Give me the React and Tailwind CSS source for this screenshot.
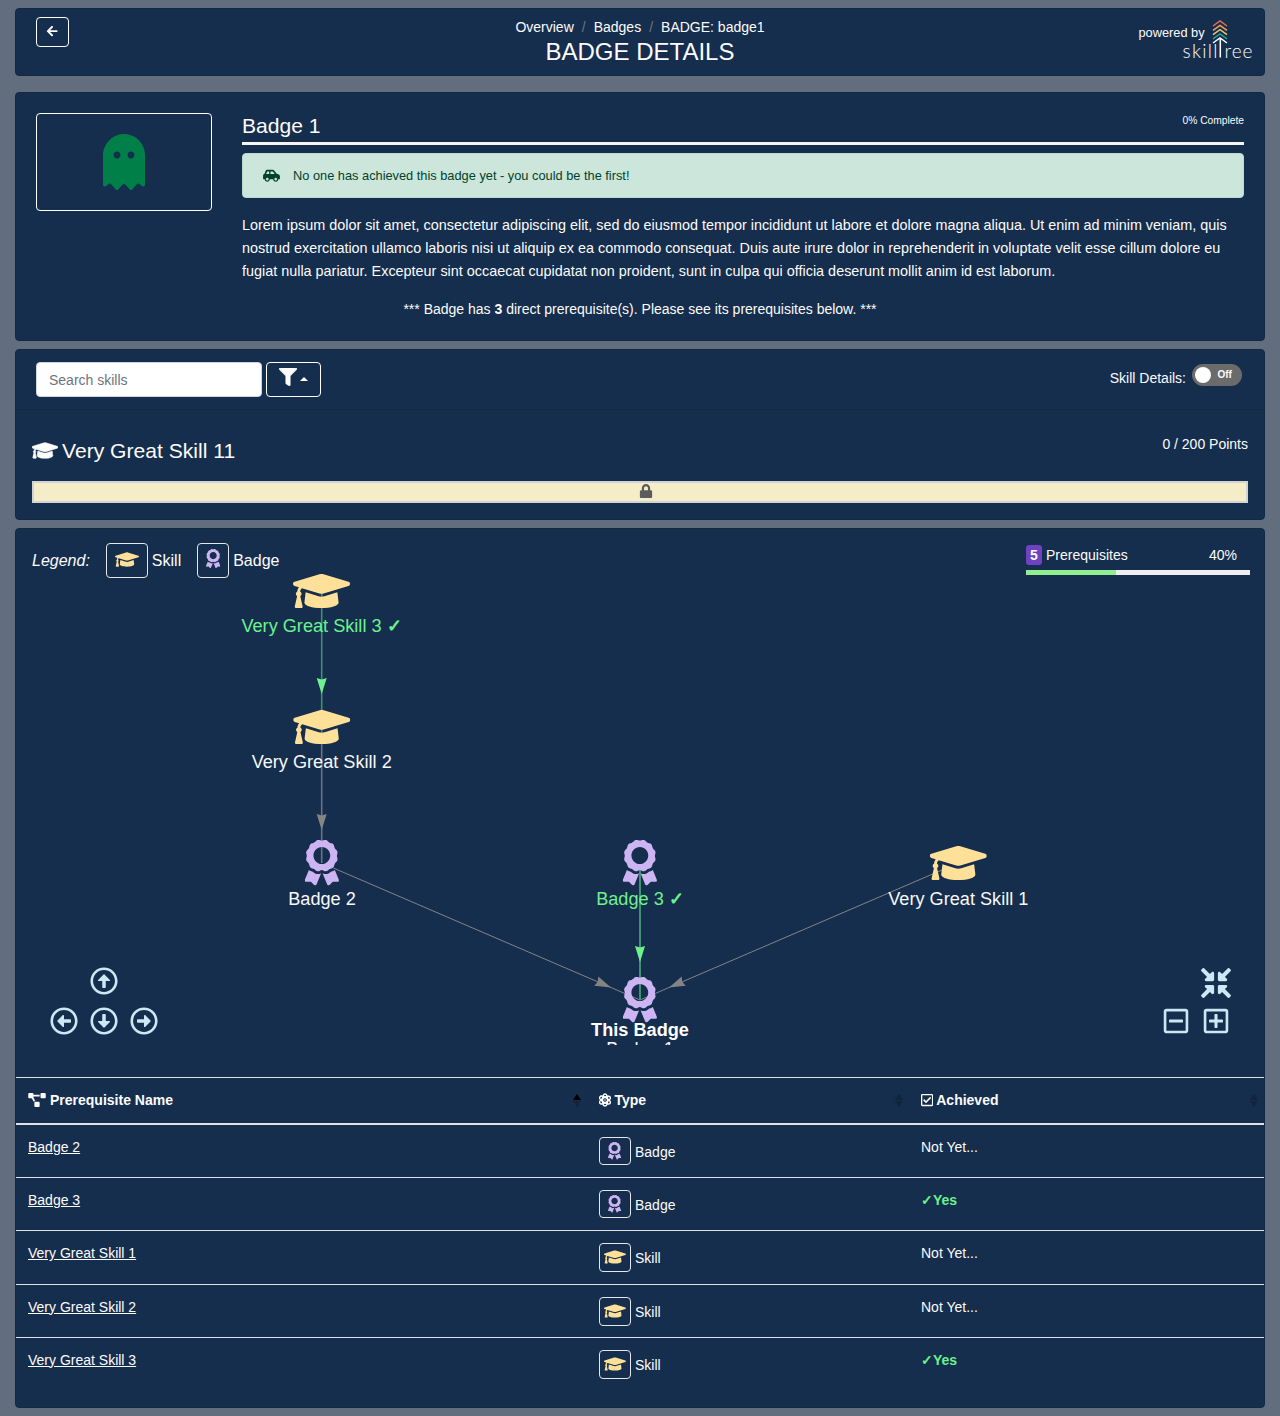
import React from 'react';
import {
  FaArrowLeft, FaGhost, FaCarSide, FaFilter, FaGraduationCap, FaAward, FaLock,
  FaRegArrowAltCircleUp, FaRegArrowAltCircleDown, FaRegArrowAltCircleLeft, FaRegArrowAltCircleRight,
  FaCompressArrowsAlt, FaRegMinusSquare, FaRegPlusSquare, FaProjectDiagram, FaRegCheckSquare,
} from 'react-icons/fa';

const card = 'rounded-[4px] border border-[#132943] bg-[#152e4d]';

function Header() {
  return (
    <header className={`${card} grid h-[68px] grid-cols-[1fr_auto_1fr] pl-5 pr-3 pt-2`}>
      <div>
        <button className="flex h-[30px] w-[33px] items-center justify-center rounded-[4px] border border-white text-[12.25px]">
          <FaArrowLeft className="-mt-[1px]" />
        </button>
      </div>
      <div className="-ml-2 text-center">
        <nav className="flex h-[21px] items-center justify-center gap-2 text-[14px] leading-[21px]">
          <span>Overview</span>
          <span className="text-[#6c757d]">/</span>
          <span>Badges</span>
          <span className="text-[#6c757d]">/</span>
          <span>BADGE: badge1</span>
        </nav>
        <h1 className="text-[24px] leading-[28px]">BADGE DETAILS</h1>
      </div>
      <div className="flex items-start justify-end">
        <span className="-mr-[22.6px] mt-[6px] text-[12.8px] leading-[20px]">powered by</span>
        <svg width="70" height="42" viewBox="0 0 70 42" className="mt-[1px]" fill="none">
          <g strokeWidth="1.5">
            <path d="M31 8 L38 3 L45 8" stroke="#e76f51" />
            <path d="M31 12.3 L38 7.3 L45 12.3" stroke="#f4a261" />
            <path d="M31 16.6 L38 11.6 L45 16.6" stroke="#e9c46a" />
            <path d="M31 20.9 L38 15.9 L45 20.9" stroke="#2a9d8f" />
            <path d="M31 25 L38 20 L45 25 M38.3 20 V39.5" stroke="#fff" />
          </g>
          <text x="0.5" y="39.5" fill="#fff" className="font-['Lato',sans-serif] text-[19px] font-light" textLength="35" lengthAdjust="spacing">skill</text>
          <text x="42.5" y="39.5" fill="#fff" className="font-['Lato',sans-serif] text-[19px] font-light" textLength="28" lengthAdjust="spacing">ree</text>
        </svg>
      </div>
    </header>
  );
}

function BadgeCard() {
  return (
    <section className={`${card} mt-4 h-[249px] p-5`}>
      <div className="flex gap-[30px]">
        <div className="flex h-[98px] w-[176px] shrink-0 items-center justify-center rounded-[4px] border border-white">
          <FaGhost className="text-[56px] text-[#007f49]" />
        </div>
        <div className="min-w-0 flex-1">
          <div className="flex h-8 items-start justify-between border-b-[3px] border-[#f8f5f5]">
            <h2 className="text-[21.1px] leading-[26px]">Badge 1</h2>
            <span className="text-[10.25px] leading-[15px]">0% Complete</span>
          </div>
          <div className="mt-2 flex h-[45px] items-center rounded-[4px] border border-[#bbdccd] bg-[#cce6db] pl-5 text-[12.8px] text-[#00422a]">
            <FaCarSide className="mr-[13px] h-[13.5px] w-[17px]" />
            <span>No one has achieved this badge yet - you could be the first!</span>
          </div>
          <p className="mt-4 text-[14.4px] leading-[23px]">
            Lorem ipsum dolor sit amet, consectetur adipiscing elit, sed do eiusmod tempor incididunt ut labore et dolore magna aliqua. Ut enim ad minim veniam, quis nostrud exercitation ullamco laboris nisi ut aliquip ex ea commodo consequat. Duis aute irure dolor in reprehenderit in voluptate velit esse cillum dolore eu fugiat nulla pariatur. Excepteur sint occaecat cupidatat non proident, sunt in culpa qui officia deserunt mollit anim id est laborum.
          </p>
        </div>
      </div>
      <p className="mt-4 text-center text-[14px] leading-[21px]">
        *** Badge has <b>3</b> direct prerequisite(s). Please see its prerequisites below. ***
      </p>
    </section>
  );
}

function SkillsCard() {
  return (
    <section className={`${card} mt-2 h-[171px]`}>
      <div className="flex h-[60px] items-start border-b border-[#132943] px-5 pt-3">
        <input
          className="h-[35px] w-[226px] rounded-[4px] border border-[#ced4da] bg-white px-3 text-[14px] placeholder:text-[#6c757d]"
          placeholder="Search skills"
        />
        <button className="ml-1 flex h-[35px] w-[55px] items-start rounded-[4px] border border-white pl-3 pt-[5px]">
          <FaFilter className="text-[18px] stroke-[#fdfbfb] stroke-[14px]" />
          <span className="ml-[3px] mt-[9px] border-x-4 border-b-4 border-x-transparent border-b-white" />
        </button>
        <div className="ml-auto mr-[2px] mt-[2px] flex items-start gap-[6px]">
          <span className="pt-1 text-[14px] leading-[21px]">Skill Details:</span>
          <span className="flex h-[22px] w-[50px] items-center rounded-full bg-[#6b6b6b] pl-[3px]">
            <span className="h-4 w-4 rounded-full bg-white" />
            <span className="ml-[6.5px] text-[10px] font-bold leading-[12px]">Off</span>
          </span>
        </div>
      </div>
      <div className="px-4">
        <div className="flex h-[71px] items-start justify-between">
          <h3 className="flex items-center gap-1 pt-[28px] text-[21.1px] leading-[26px]">
            <FaGraduationCap className="-mt-[2px] h-[21px] w-[26px] stroke-[#fdfbfb] stroke-[14px]" />
            Very Great Skill 11
          </h3>
          <span className="pt-6 text-[14px] leading-[21px]">0 / 200 Points</span>
        </div>
        <div className="flex h-[22px] items-center justify-center border-2 border-[#d3d3d3] bg-[#f5edc8] text-[14px] text-[#5b5b5b]">
          <FaLock className="-mt-[2px] ml-3" />
        </div>
      </div>
    </section>
  );
}

const caps = [
  { x: 321.5, y: 591, label: 'Very Great Skill 3', done: true },
  { x: 321.7, y: 727, label: 'Very Great Skill 2' },
  { x: 958.3, y: 863, label: 'Very Great Skill 1' },
];
const awards = [
  { x: 322, y: 862.7, label: 'Badge 2' },
  { x: 640, y: 862.7, label: 'Badge 3', done: true },
  { x: 640, y: 999.7 },
];

function Arrow({ x, y, angle, color }) {
  return <path d="M0 0 L-16 -5 L-14.4 0 L-16 5 Z" fill={color} transform={`translate(${x} ${y}) rotate(${angle})`} />;
}

function NodeLabel({ x, y, label, done }) {
  return (
    <text x={x} y={y} textAnchor="middle" fontSize="18.15" fill={done ? '#6df18d' : '#f8f8f8'}>
      {label}{done && <tspan fontWeight="bold"> ✓</tspan>}
    </text>
  );
}

function Graph() {
  return (
    <svg className="absolute left-0 top-0" width="1248" height="516" viewBox="16 529 1248 516">
      <g fill="none">
        <path d="M321.7 593 V727" stroke="#3f9270" strokeWidth="1.6" />
        <path d="M321.7 729 V863" stroke="#6b7380" strokeWidth="1.6" />
        <path d="M333.3 868 L640 1000 L943 869.6" stroke="#848484" />
        <path d="M640 870 V1000" stroke="#3f9270" strokeWidth="2" />
      </g>
      <Arrow x={321.7} y={694} angle={90} color="#6df18d" />
      <Arrow x={321.7} y={830} angle={90} color="#848484" />
      <Arrow x={640} y={962} angle={90} color="#6df18d" />
      <Arrow x={611} y={987.5} angle={23.3} color="#848484" />
      <Arrow x={669} y={987.5} angle={156.7} color="#848484" />
      {caps.map((n) => (
        <g key={n.label}>
          <FaGraduationCap x={n.x - 28.5} y={n.y - 22.8} className="h-[45.6px] w-[57px]" fill="#ffe099" />
          <NodeLabel {...n} y={n.y + (n.y > 800 ? 42 : 41)} />
        </g>
      ))}
      {awards.map((n, i) => (
        <g key={i}>
          <FaAward x={n.x - 17.25} y={n.y - 22.8} className="h-[45.6px] w-[34.2px]" fill="#cdb4f2" />
          {n.label && <NodeLabel {...n} y={n.y + 42.3} />}
        </g>
      ))}
      <text x="640" y="1036" textAnchor="middle" fontSize="18.15" fontWeight="bold" fill="#fff">This Badge</text>
      <text x="640" y="1055" textAnchor="middle" fontSize="18.15" fill="#f8f8f8">Badge 1</text>
    </svg>
  );
}

function TypeIcon({ type, className }) {
  return (
    <span className={`flex justify-center rounded-[4px] border border-[#e4e8ec] ${className}`}>
      {type === 'Skill'
        ? <FaGraduationCap className="h-full w-[1.25em] text-[#ffe099]" />
        : <FaAward className="h-[1em] w-[0.75em] text-[#cdb4f2]" />}
    </span>
  );
}

function GraphArea() {
  return (
    <div className="relative h-[548px]">
      <Graph />
      <div className="relative flex items-start justify-between pl-4 pr-[14px] pt-[14px]">
        <div className="flex h-[35px] items-center text-[16px]">
          <i className="mr-4">Legend:</i>
          <TypeIcon type="Skill" className="mr-1 h-[35px] w-[42px] pb-[2px] text-[19.2px]" />
          <span className="mr-4">Skill</span>
          <TypeIcon type="Badge" className="mr-1 h-[35px] w-[32px] pt-[5px] text-[19.2px]" />
          <span>Badge</span>
        </div>
        <div className="mt-[2px] w-[224px] text-[14px]">
          <div className="flex h-5 items-center pr-[13px]">
            <span className="mr-1 flex h-5 w-4 items-center justify-center rounded-[3px] bg-[#6f42c1] font-bold">5</span>
            <span>Prerequisites</span>
            <span className="ml-auto">40%</span>
          </div>
          <div className="mt-[5px] h-[5px] bg-[#efefef]">
            <div className="h-full w-[90px] bg-[#90ee90]" />
          </div>
        </div>
      </div>
      <div className="absolute left-[34px] top-[438px] grid grid-cols-3 gap-x-3 gap-y-3 text-[28px] text-[#cbe8f4]">
        <FaRegArrowAltCircleUp className="col-start-2" />
        <FaRegArrowAltCircleLeft className="col-start-1" />
        <FaRegArrowAltCircleDown />
        <FaRegArrowAltCircleRight />
      </div>
      <div className="absolute right-[28px] top-[434px] grid grid-cols-[40px_40px] grid-rows-[40px_36px] place-items-center text-[#cbe8f4]">
        <FaCompressArrowsAlt className="col-start-2 h-[30px] w-[30px]" />
        <FaRegMinusSquare className="col-start-1 h-[28px] w-[28px]" />
        <FaRegPlusSquare className="h-[28px] w-[28px]" />
      </div>
    </div>
  );
}

const rows = [
  { name: 'Badge 2', type: 'Badge', done: false },
  { name: 'Badge 3', type: 'Badge', done: true },
  { name: 'Very Great Skill 1', type: 'Skill', done: false },
  { name: 'Very Great Skill 2', type: 'Skill', done: false },
  { name: 'Very Great Skill 3', type: 'Skill', done: true },
];

function AtomIcon() {
  return (
    <svg width="12" height="14" viewBox="0 0 12 14" fill="none" stroke="#fff" strokeWidth="1.5">
      <ellipse cx="6" cy="7" rx="2.5" ry="6" />
      <ellipse cx="6" cy="7" rx="2.5" ry="6" transform="rotate(60 6 7)" />
      <ellipse cx="6" cy="7" rx="2.5" ry="6" transform="rotate(120 6 7)" />
      <circle cx="6" cy="7" r="0.8" fill="#fff" stroke="none" />
    </svg>
  );
}

function Sort({ active }) {
  return (
    <span className="ml-auto flex flex-col gap-[1px]">
      <span className={`border-x-[4.5px] border-b-[6px] border-x-transparent ${active ? 'border-b-black' : 'border-b-[#11243c]'}`} />
      <span className="border-x-[4.5px] border-t-[6px] border-x-transparent border-t-[#11243c]" />
    </span>
  );
}

const cols = 'grid grid-cols-[571px_322px_1fr]';

function Table() {
  return (
    <div className="text-[14px] leading-[21px]">
      <div className={`${cols} h-12 border-b-2 border-t border-[#dee2e6] font-bold`}>
        <div className="flex items-center pl-3 pr-[6px]"><FaProjectDiagram className="-mt-[2px] mr-1 h-[14px] w-[18px]" />Prerequisite Name<Sort active /></div>
        <div className="flex items-center pl-3 pr-[6px]"><span className="-mt-[1px] mr-[3.5px]"><AtomIcon /></span>Type<Sort /></div>
        <div className="flex items-center pl-3 pr-[6px]"><FaRegCheckSquare className="-mt-[2px] mr-[3px] h-[14px] w-[12.25px]" />Achieved<Sort /></div>
      </div>
      {rows.map((r, i) => (
        <div key={r.name} className={`${cols} pt-3 ${i ? 'h-[53.2px] border-t border-[#dee2e6]' : 'h-[52.2px]'}`}>
          <div className="pl-3"><span className="underline">{r.name}</span></div>
          <div className="flex items-start pl-3">
            <TypeIcon type={r.type} className={r.type === 'Skill' ? 'mr-1 h-[29px] w-8 pb-[2px] pt-[1px] text-[17.5px]' : 'mr-1 h-7 w-8 pt-1 text-[17.5px]'} />
            <span className="pt-[5px]">{r.type}</span>
          </div>
          <div className={`pl-3 ${r.done ? 'font-bold text-[#6df18d]' : ''}`}>{r.done ? '✓Yes' : 'Not Yet...'}</div>
        </div>
      ))}
    </div>
  );
}

export default function App() {
  return (
    <main className="h-[1416px] overflow-hidden bg-[#626d7d] px-[15px] pt-2 font-['Liberation_Sans',Arial,sans-serif] text-[#fdfbfb]">
      <Header />
      <BadgeCard />
      <SkillsCard />
      <section className={`${card} mt-2 h-[880px]`}>
        <GraphArea />
        <Table />
      </section>
    </main>
  );
}
